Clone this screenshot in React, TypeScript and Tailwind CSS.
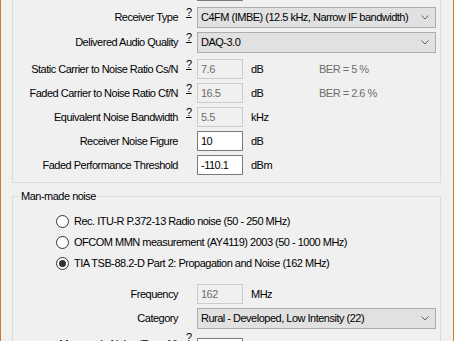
import type { ReactNode } from 'react';

function Help({ raise }: { raise?: string }) {
  return <span className={`underline underline-offset-[1px] leading-[11px] ${raise ?? 'mb-[10px]'}`}>?</span>;
}

function Row({
  label,
  help,
  h,
  labelRaise,
  helpRaise,
  children,
}: {
  label: string;
  help?: boolean;
  h: string;
  labelRaise?: string;
  helpRaise?: string;
  children: ReactNode;
}) {
  return (
    <div className={`flex items-center shrink-0 ${h}`}>
      <div className={`w-[165px] text-right whitespace-nowrap ${labelRaise ?? ''}`}>{label}</div>
      <div className="w-[19px] pl-[8px] flex items-center">{help && <Help raise={helpRaise} />}</div>
      {children}
    </div>
  );
}

function Box({ value, disabled }: { value: string; disabled?: boolean }) {
  return (
    <div
      className={
        disabled
          ? 'w-[46px] h-[20px] border border-[#cccccc] bg-[#f0f0f0] text-[#6d6d6d] px-[3px] leading-[18px]'
          : 'w-[46px] h-[20px] border border-[#7a7a7a] bg-white px-[3px] leading-[18px]'
      }
    >
      {value}
    </div>
  );
}

function Combo({ value }: { value: string }) {
  return (
    <div className="w-[239px] h-[21px] border border-[#adadad] bg-[#e1e1e1] flex items-center pl-[3px] pr-[6px]">
      <span className="flex-1 whitespace-nowrap">{value}</span>
      <svg width="8" height="5" viewBox="0 0 8 5">
        <path d="M0.5 0.5 L4 4 L7.5 0.5" fill="none" stroke="#606060" strokeWidth="1" />
      </svg>
    </div>
  );
}

function Unit({ unit, note }: { unit: string; note?: string }) {
  return (
    <>
      <span className="ml-[8px] w-[68px]">{unit}</span>
      {note && <span className="text-[#6d6d6d]">{note}</span>}
    </>
  );
}

function Radio({ label, checked }: { label: string; checked?: boolean }) {
  return (
    <div className="flex items-center h-[21px] pl-[43px] gap-[5px]">
      <span className="w-[13px] h-[13px] rounded-full border border-[#333333] bg-white flex items-center justify-center">
        {checked && <span className="w-[7px] h-[7px] rounded-full bg-[#333333]" />}
      </span>
      <span className="whitespace-nowrap">{label}</span>
    </div>
  );
}

export default function App() {
  return (
    <div className="w-[454px] h-[341px] overflow-hidden bg-[#f0f0f0] border-x border-[#cf7a2b] pl-[11px] pr-[12px] flex flex-col text-[11px] tracking-[-0.5px] text-black font-['Liberation_Sans',Arial,sans-serif]">
      {/* receiver group, top is scrolled out of view */}
      <div className="mt-[-30px] border border-[#dcdcdc] pt-[8px] pb-[5px] flex flex-col shrink-0">
        <Row label="" h="h-[24px]">
          <Box value="" />
        </Row>
        <div className="mt-[2px]" />
        <Row label="Receiver Type" help h="h-[25px]">
          <Combo value="C4FM (IMBE) (12.5 kHz, Narrow IF bandwidth)" />
        </Row>
        <Row label="Delivered Audio Quality" help h="h-[25px]">
          <Combo value="DAQ-3.0" />
        </Row>
        <div className="mt-[2px]" />
        <Row label="Static Carrier to Noise Ratio Cs/N" help h="h-[24px]">
          <Box value="7.6" disabled />
          <Unit unit="dB" note="BER = 5 %" />
        </Row>
        <Row label="Faded Carrier to Noise Ratio Cf/N" help h="h-[24px]">
          <Box value="16.5" disabled />
          <Unit unit="dB" note="BER = 2.6 %" />
        </Row>
        <Row label="Equivalent Noise Bandwidth" help h="h-[24px]">
          <Box value="5.5" disabled />
          <Unit unit="kHz" />
        </Row>
        <Row label="Receiver Noise Figure" h="h-[24px]">
          <Box value="10" />
          <Unit unit="dB" />
        </Row>
        <Row label="Faded Performance Threshold" h="h-[24px]">
          <Box value="-110.1" />
          <Unit unit="dBm" />
        </Row>
      </div>

      <fieldset className="mt-[7px] border border-[#dcdcdc] shrink-0">
        <legend className="ml-[7px] px-[1px] leading-[13px]">Man-made noise</legend>
        <div className="flex flex-col pt-[8px]">
          <Radio label="Rec. ITU-R P.372-13 Radio noise (50 - 250 MHz)" />
          <Radio label="OFCOM MMN measurement (AY4119) 2003 (50 - 1000 MHz)" />
          <Radio label="TIA TSB-88.2-D Part 2: Propagation and Noise (162 MHz)" checked />
          <div className="mt-[8px]" />
          <Row label="Frequency" h="h-[24px]">
            <Box value="162" disabled />
            <Unit unit="MHz" />
          </Row>
          <Row label="Category" h="h-[25px]">
            <Combo value="Rural - Developed, Low Intensity (22)" />
          </Row>
          <div className="mt-[5px]" />
          <Row label="Man-made Noise (Fam, N)" help h="h-[24px]" labelRaise="mb-[8px]" helpRaise="mb-[22px]">
            <Box value="12.1" />
            <Unit unit="dB" />
          </Row>
        </div>
      </fieldset>
    </div>
  );
}
